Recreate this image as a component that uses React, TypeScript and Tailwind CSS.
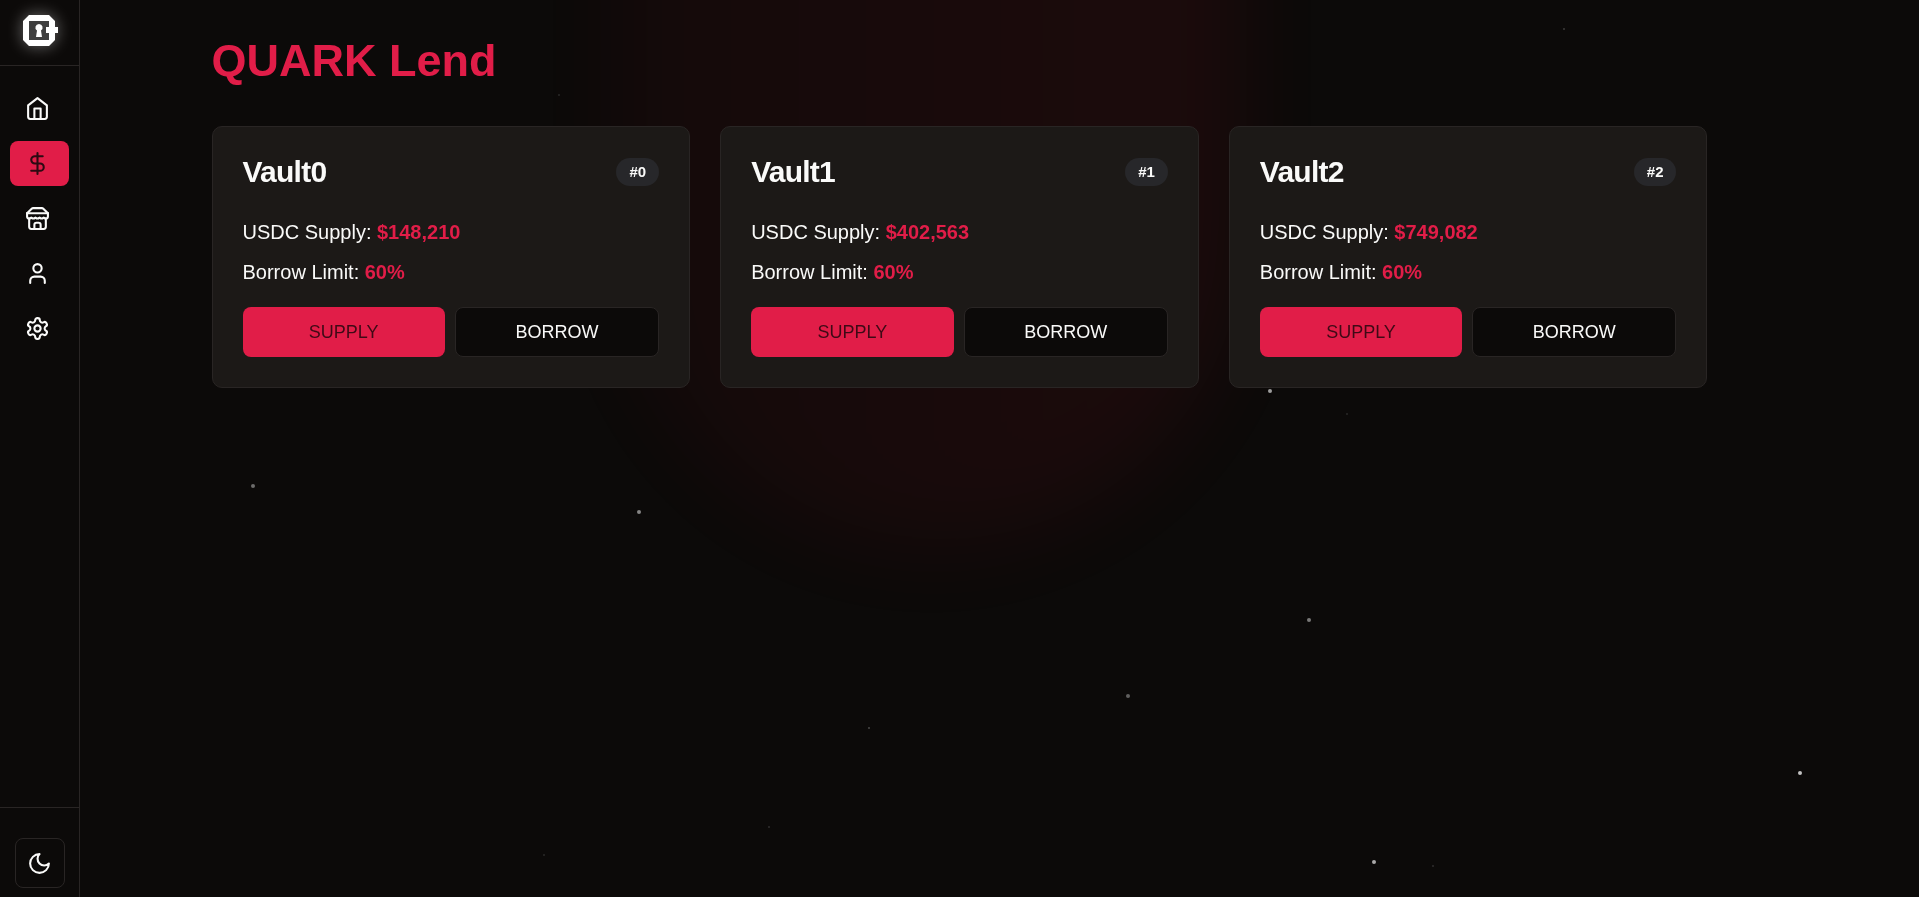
import React from "react";
import { DollarSign, User } from "lucide-react";

const vaults = [
  { id: 0, name: "Vault0", supply: "$148,210", limit: "60%" },
  { id: 1, name: "Vault1", supply: "$402,563", limit: "60%" },
  { id: 2, name: "Vault2", supply: "$749,082", limit: "60%" },
];

function Icon({ paths }: { paths: string[] }) {
  return (
    <svg
      viewBox="0 0 24 24"
      className="size-[25px] fill-none stroke-current stroke-2"
      strokeLinecap="round"
      strokeLinejoin="round"
      aria-hidden="true"
    >
      {paths.map((d) => (
        <path key={d} d={d} />
      ))}
    </svg>
  );
}

const homePaths = ["m3 9 9-7 9 7v11a2 2 0 0 1-2 2H5a2 2 0 0 1-2-2z", "M9 22V12h6v10"];

const storePaths = [
  "m2 7 4.41-4.41A2 2 0 0 1 7.83 2h8.34a2 2 0 0 1 1.42.59L22 7",
  "M4 12v8a2 2 0 0 0 2 2h12a2 2 0 0 0 2-2v-8",
  "M15 22v-4a2 2 0 0 0-2-2h-2a2 2 0 0 0-2 2v4",
  "M2 7h20",
  "M22 7v3a2 2 0 0 1-2 2a2.7 2.7 0 0 1-1.59-.63.7.7 0 0 0-.82 0A2.7 2.7 0 0 1 16 12a2.7 2.7 0 0 1-1.59-.63.7.7 0 0 0-.82 0A2.7 2.7 0 0 1 12 12a2.7 2.7 0 0 1-1.59-.63.7.7 0 0 0-.82 0A2.7 2.7 0 0 1 8 12a2.7 2.7 0 0 1-1.59-.63.7.7 0 0 0-.82 0A2.7 2.7 0 0 1 4 12a2 2 0 0 1-2-2V7",
];

const gearPaths = [
  "M12.22 2h-.44a2 2 0 0 0-2 2v.18a2 2 0 0 1-1 1.73l-.43.25a2 2 0 0 1-2 0l-.15-.08a2 2 0 0 0-2.73.73l-.22.38a2 2 0 0 0 .73 2.73l.15.1a2 2 0 0 1 1 1.72v.51a2 2 0 0 1-1 1.74l-.15.09a2 2 0 0 0-.73 2.73l.22.38a2 2 0 0 0 2.73.73l.15-.08a2 2 0 0 1 2 0l.43.25a2 2 0 0 1 1 1.73V20a2 2 0 0 0 2 2h.44a2 2 0 0 0 2-2v-.18a2 2 0 0 1 1-1.73l.43-.25a2 2 0 0 1 2 0l.15.08a2 2 0 0 0 2.73-.73l.22-.39a2 2 0 0 0-.73-2.73l-.15-.08a2 2 0 0 1-1-1.74v-.5a2 2 0 0 1 1-1.74l.15-.09a2 2 0 0 0 .73-2.73l-.22-.38a2 2 0 0 0-2.73-.73l-.15.08a2 2 0 0 1-2 0l-.43-.25a2 2 0 0 1-1-1.73V4a2 2 0 0 0-2-2z",
  "M15 12a3 3 0 1 1-6 0 3 3 0 0 1 6 0z",
];

const moonPaths = ["M12 3a6 6 0 0 0 9 9 9 9 0 1 1-9-9Z"];

const links = [
  { label: "Home", icon: <Icon paths={homePaths} />, active: false },
  { label: "Lend", icon: <DollarSign size={25} />, active: true },
  { label: "Market", icon: <Icon paths={storePaths} />, active: false },
  { label: "Profile", icon: <User size={25} />, active: false },
  { label: "Settings", icon: <Icon paths={gearPaths} />, active: false },
];

// x and y in percent of the window, size in pixels
const stars = [
  { x: 13.1, y: 54, size: 4, o: 0.4 },
  { x: 33.2, y: 56.9, size: 4, o: 0.5 },
  { x: 66.1, y: 43.35, size: 4, o: 0.6 },
  { x: 68.1, y: 68.85, size: 4, o: 0.45 },
  { x: 58.68, y: 77.4, size: 4, o: 0.35 },
  { x: 93.7, y: 86, size: 4, o: 0.75 },
  { x: 71.5, y: 95.85, size: 4, o: 0.65 },
  { x: 81.45, y: 3.1, size: 2, o: 0.2 },
  { x: 45.22, y: 81, size: 2, o: 0.25 },
  { x: 40, y: 92.05, size: 2, o: 0.15 },
  { x: 28.3, y: 95.2, size: 2, o: 0.13 },
  { x: 74.6, y: 96.45, size: 2, o: 0.15 },
  { x: 70.15, y: 46.05, size: 2, o: 0.12 },
  { x: 29.1, y: 10.5, size: 2, o: 0.12 },
];

function Logo() {
  return (
    <svg viewBox="0 0 35 31" className="h-[31px] w-[35px] drop-shadow-[0_0_8px_rgba(255,255,255,0.4)]" aria-hidden="true">
      <path fill="#fff" d="M6 0h20l6 6v6h3v6h-3v7l-6 6H6l-6-6V6z" />
      <path fill="#3f3f3f" d="M6 6h20v6h-3v6h3v7H6z" />
      <path fill="#fff" d="M16 9a3.6 3.6 0 0 1 2 6.6l1 6.4h-6l1-6.4A3.6 3.6 0 0 1 16 9z" />
    </svg>
  );
}

function Sidebar() {
  return (
    <aside className="fixed inset-y-0 left-0 z-10 flex w-20 flex-col border-r border-[#292524] bg-[#0c0a09]">
      <a href="#" aria-label="Quark" className="flex h-[66px] justify-end border-b border-[#292524] pt-[15px] pr-[21px]">
        <Logo />
      </a>
      <nav className="flex grow flex-col gap-[10px] px-[10px] pt-5">
        {links.map(({ label, icon, active }) => (
          <a
            key={label}
            href="#"
            aria-label={label}
            className={
              active
                ? "flex h-[45px] items-center rounded-lg bg-[#e11d48] px-[15px] text-[#2d0a12]"
                : "flex h-[45px] items-center rounded-lg px-[15px] text-[#fafaf9]"
            }
          >
            {icon}
          </a>
        ))}
      </nav>
      <div className="flex justify-center border-t border-[#292524] pt-[30px] pb-[9px]">
        <button
          type="button"
          aria-label="Toggle theme"
          className="flex size-[50px] items-center justify-center rounded-lg border border-[#292524] text-[#fafaf9]"
        >
          <Icon paths={moonPaths} />
        </button>
      </div>
    </aside>
  );
}

function Backdrop() {
  return (
    <div aria-hidden="true" className="fixed inset-0 overflow-hidden">
      <div className="absolute top-[-300px] left-1/2 h-[850px] w-[630px] -translate-x-[350px] rounded-b-[315px] bg-linear-to-r from-[#e11d3880] to-[#e11d38] opacity-[0.08] blur-[45px]" />
      {stars.map((s) => (
        <span
          key={`${s.x}-${s.y}`}
          className="absolute rounded-full bg-white"
          style={{ left: `${s.x}%`, top: `${s.y}%`, width: s.size, height: s.size, opacity: s.o }}
        />
      ))}
    </div>
  );
}

function VaultCard({ vault }: { vault: (typeof vaults)[number] }) {
  return (
    <section className="rounded-[10px] border border-[#292524] bg-[#1c1917] p-[30px] text-[#fafaf9]">
      <div className="flex h-[30px] items-center justify-between">
        <h2 className="text-[30px] leading-[30px] font-bold tracking-tight">{vault.name}</h2>
        <span className="rounded-full bg-[#27272a] px-[13px] py-1 text-[15px] leading-5 font-bold">#{vault.id}</span>
      </div>
      <div className="mt-[30px] flex flex-col gap-[10px] text-xl leading-[30px]">
        <p>
          USDC Supply: <span className="font-bold text-[#e11d48]">{vault.supply}</span>
        </p>
        <p>
          Borrow Limit: <span className="font-bold text-[#e11d48]">{vault.limit}</span>
        </p>
      </div>
      <div className="mt-5 flex gap-[10px]">
        <button type="button" className="h-[50px] flex-1 rounded-lg bg-[#e11d48] text-lg text-[#3f0a16]">
          SUPPLY
        </button>
        <button type="button" className="h-[50px] flex-1 rounded-lg border border-[#292524] bg-[#0c0a09] text-lg">
          BORROW
        </button>
      </div>
    </section>
  );
}

export default function App() {
  return (
    <div className="min-h-screen bg-[#0c0a09] font-['Liberation_Sans',Arial,sans-serif]">
      <Backdrop />
      <Sidebar />
      <main className="relative mx-auto max-w-[1536px] px-5 pt-9">
        <h1 className="text-[45px] leading-[50px] font-bold text-[#e11d48]">QUARK Lend</h1>
        <div className="mt-10 grid grid-cols-3 gap-[30px]">
          {vaults.map((v) => (
            <VaultCard key={v.id} vault={v} />
          ))}
        </div>
      </main>
    </div>
  );
}
